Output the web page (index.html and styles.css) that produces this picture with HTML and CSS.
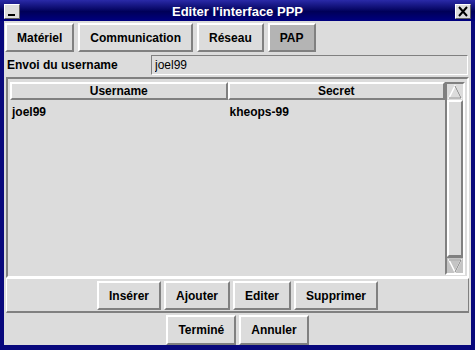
FILE: index.html
```html
<!DOCTYPE html>
<html lang="fr">
<head>
    <meta charset="UTF-8">
    <title>Editer l'interface PPP</title>
    <link rel="stylesheet" href="styles.css">
</head>
<body>

    <div class="window">
        <!-- Title bar -->
        <div class="titlebar">
            <span class="wm-btn"><span class="dash"></span></span>
            <span class="title">Editer l'interface PPP</span>
            <span class="wm-btn">
                <svg width="12" height="11" viewBox="0 0 12 11"><path d="M2 1 L10 10 M10 1 L2 10" stroke="#000" stroke-width="2"/></svg>
            </span>
        </div>

        <!-- Tabs -->
        <div class="tabs">
            <button class="btn">Matériel</button>
            <button class="btn">Communication</button>
            <button class="btn">Réseau</button>
            <button class="btn active">PAP</button>
        </div>

        <div class="field">
            <label>Envoi du username</label>
            <input type="text" value="joel99">
        </div>

        <!-- Users table -->
        <div class="table-frame">
            <div class="list">
                <div class="head">
                    <div class="col">Username</div>
                    <div class="col">Secret</div>
                </div>
                <div class="row"><span>joel99</span><span>kheops-99</span></div>
            </div>
            <div class="scrollbar">
                <div class="arrow">
                    <svg width="16" height="16" viewBox="0 0 16 16"><path d="M8 2 L14 14 L2 14 Z" fill="none" stroke="#fff" stroke-width="1.5"/><path d="M8 2 L14 14 L2 14" fill="none" stroke="#808080" stroke-width="1"/></svg>
                </div>
                <div class="thumb"></div>
                <div class="arrow down">
                    <svg width="16" height="16" viewBox="0 0 16 16"><path d="M2 2 L14 2 L8 14 Z" fill="none" stroke="#fff" stroke-width="1.5"/><path d="M2 2 L14 2 L8 14" fill="none" stroke="#808080" stroke-width="1"/></svg>
                </div>
            </div>
        </div>

        <div class="actions">
            <button class="btn">Insérer</button>
            <button class="btn">Ajouter</button>
            <button class="btn">Editer</button>
            <button class="btn">Supprimer</button>
        </div>

        <div class="footer">
            <button class="btn tall">Terminé</button>
            <button class="btn tall">Annuler</button>
        </div>
    </div>

</body>
</html>
```

FILE: styles.css
```css
/* Page */
body { margin: 0; font-family: "Liberation Sans", Arial, sans-serif; font-size: 12px; }
.window { width: 475px; height: 350px; box-sizing: border-box; border: 4px solid #08087c; border-bottom-width: 5px; border-top: none; background: #dcdcdc; display: flex; flex-direction: column; }

/* Title bar */
.titlebar { height: 21px; box-sizing: border-box; padding-top: 4px; margin: 0 -4px; padding-left: 4px; padding-right: 4px; display: flex; align-items: flex-start; background: linear-gradient(to bottom, #2a2aa8 0%, #000058 55%, #000080 100%); }
.title { flex: 1; text-align: center; color: white; font-weight: bold; font-size: 13px; line-height: 15px; }
.wm-btn { width: 16px; height: 15px; box-sizing: border-box; background: #dcdcdc; border: 1px solid; border-color: #fff #606060 #606060 #fff; display: flex; align-items: center; justify-content: center; position: relative; }
.dash { position: absolute; left: 3px; bottom: 2px; width: 7px; height: 2px; background: #000; }

/* Buttons */
.btn { height: 29px; box-sizing: border-box; padding: 0 10px; font-family: inherit; font-size: 12px; font-weight: bold; color: #000; background: #dcdcdc; border: 2px solid; border-color: #fff #808080 #808080 #fff; }
.btn.active { background: #b4b4b4; }
.btn.tall { height: 30px; }

/* Tabs */
.tabs { display: flex; gap: 4px; padding: 2px 0 0 1px; }

/* Username field */
.field { display: flex; align-items: center; margin-top: 3px; padding-left: 3px; padding-right: 3px; }
.field label { width: 144px; font-weight: bold; font-size: 12px; }
.field input { flex: 1; height: 20px; box-sizing: border-box; margin: 0; padding: 0 3px; font-family: inherit; font-size: 12px; background: #dcdcdc; border: 1px solid; border-color: #808080 #fff #fff #808080; outline: none; }

/* Table */
.table-frame { height: 201px; box-sizing: border-box; margin: 2px 2px 0; padding: 3px 2px 1px 2px; border: 2px solid; border-color: #808080 #fff #fff #808080; display: flex; }
.list { flex: 1; }
.head { display: flex; }
.head .col { flex: 1; height: 18px; box-sizing: border-box; text-align: center; font-weight: bold; line-height: 14px; border: 2px solid; border-color: #fff #808080 #808080 #fff; }
.row { display: flex; height: 24px; align-items: center; font-weight: bold; }
.row span { flex: 1; padding-left: 2px; }

/* Scrollbar */
.scrollbar { width: 20px; box-sizing: border-box; border: 2px solid; border-color: #808080 #fff #fff #808080; display: flex; flex-direction: column; }
.arrow { height: 16px; box-sizing: border-box; background: #dcdcdc; display: flex; }
.arrow.down { background: #c4c4c4; border-top: 1px solid #808080; }
.thumb { flex: 1; border: 2px solid; border-color: #fff #808080 #808080 #fff; }

/* Bottom rows */
.actions { display: flex; justify-content: center; gap: 3px; margin: 0 2px; padding: 2px 0 1px; border: 1px solid; border-bottom-width: 2px; border-color: #fff #808080 #808080 #fff; }
.footer { flex: 1; display: flex; justify-content: center; gap: 3px; padding-top: 2px; }
```
